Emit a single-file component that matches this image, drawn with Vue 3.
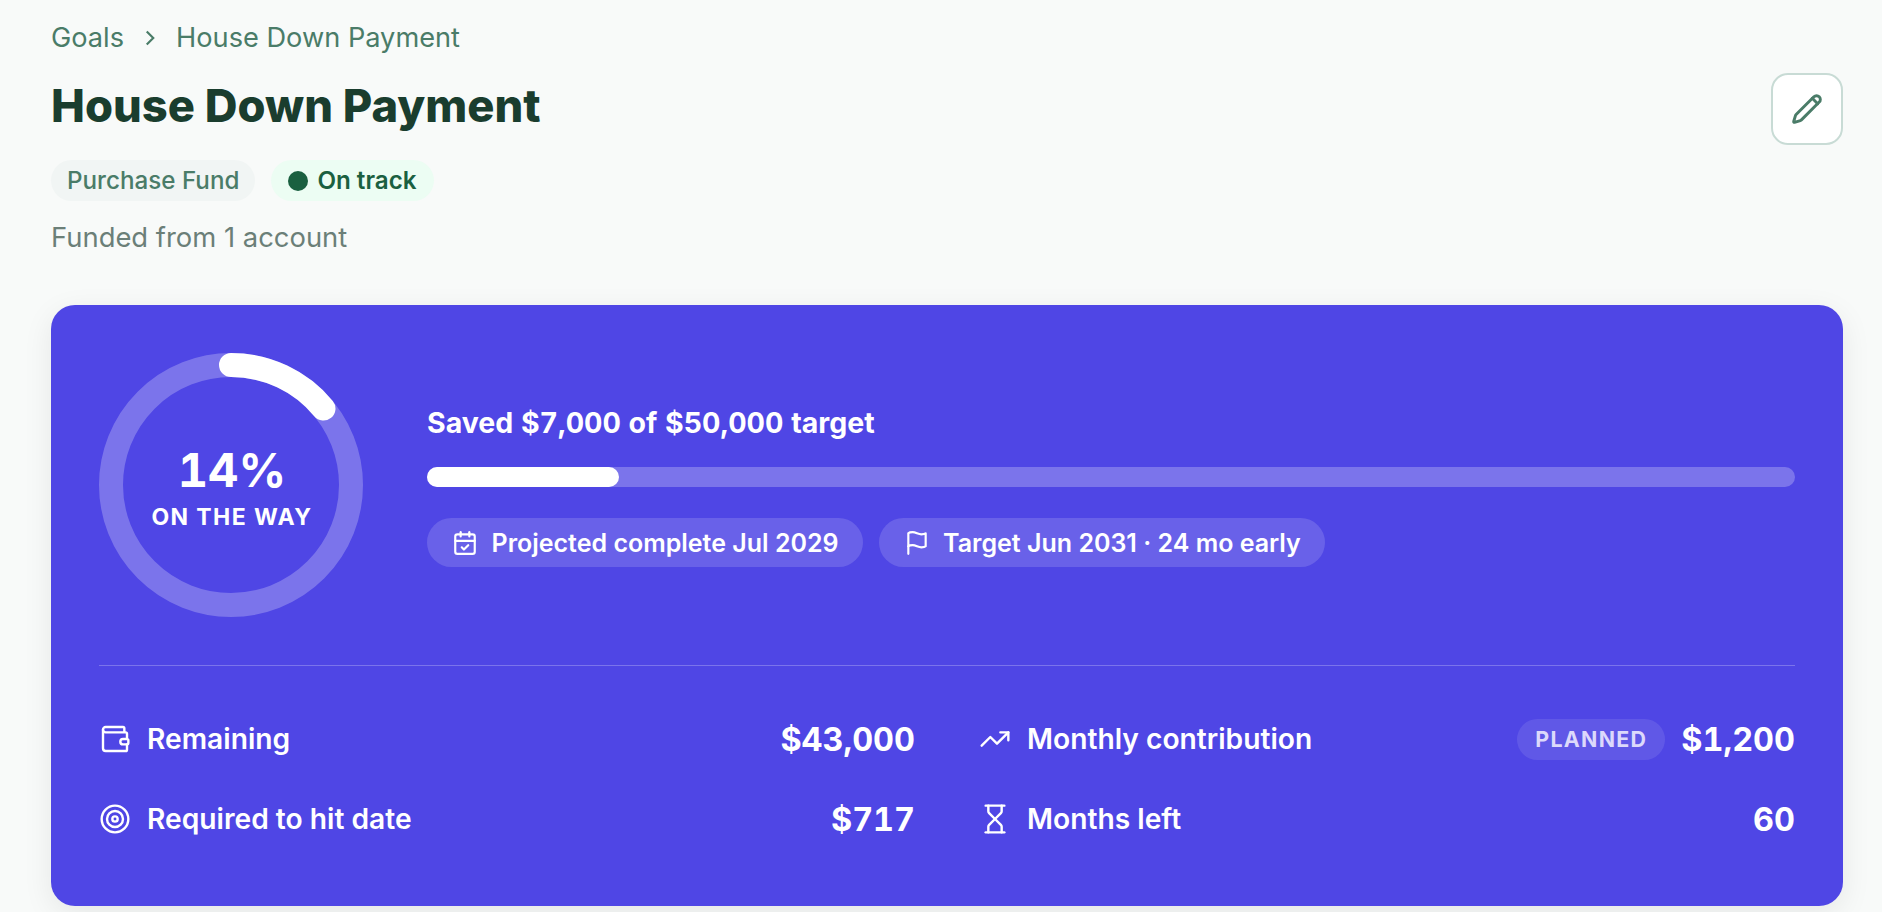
<template>
  <div class="page">
    <nav class="crumbs">
      <span>Goals</span>
      <svg class="crumb-sep" viewBox="0 0 24 24"><path d="m9 18 6-6-6-6" /></svg>
      <span>House Down Payment</span>
    </nav>

    <header class="head">
      <div class="head-text">
        <h1>House Down Payment</h1>
        <div class="tags">
          <span class="tag tag-gray">Purchase Fund</span>
          <span class="tag tag-green"><i class="dot"></i>On track</span>
        </div>
        <p class="funded">Funded from 1 account</p>
      </div>
      <button class="edit" type="button">
        <svg viewBox="0 0 24 24">
          <path d="M21.174 6.812a1 1 0 0 0-3.986-3.987L3.842 16.174a2 2 0 0 0-.5.83l-1.321 4.352a.5.5 0 0 0 .623.622l4.353-1.32a2 2 0 0 0 .83-.497z" />
          <path d="m16 4 4 4" />
        </svg>
      </button>
    </header>

    <section class="card">
      <div class="top">
        <div class="ring">
          <svg viewBox="0 0 264 264">
            <circle class="ring-track" cx="132" cy="132" r="120" />
            <circle
              class="ring-value"
              cx="132"
              cy="132"
              r="120"
              :stroke-dasharray="ringDash"
              transform="rotate(-90 132 132)"
            />
          </svg>
          <div class="ring-text">
            <strong>14%</strong>
            <span>ON THE WAY</span>
          </div>
        </div>

        <div class="progress">
          <p class="saved">Saved $7,000 of $50,000 target</p>
          <div class="bar"><div class="bar-fill" :style="{ width: percent + '%' }"></div></div>
          <div class="chips">
            <span class="chip">
              <svg viewBox="0 0 24 24">
                <path d="M8 2v4" />
                <path d="M16 2v4" />
                <rect x="3" y="4" width="18" height="18" rx="2" />
                <path d="M3 10h18" />
                <path d="m9 16 2 2 4-4" />
              </svg>
              Projected complete Jul 2029
            </span>
            <span class="chip">
              <svg viewBox="0 0 24 24">
                <path d="M4 15s1-1 4-1 5 2 8 2 4-1 4-1V3s-1 1-4 1-5-2-8-2-4 1-4 1z" />
                <path d="M4 22v-7" />
              </svg>
              Target Jun 2031 · 24 mo early
            </span>
          </div>
        </div>
      </div>

      <div class="stats">
        <div class="stat">
          <svg viewBox="0 0 24 24">
            <path d="M19 7V4a1 1 0 0 0-1-1H5a2 2 0 0 0 0 4h15a1 1 0 0 1 1 1v4h-3a2 2 0 0 0 0 4h3a1 1 0 0 0 1-1v-2a1 1 0 0 0-1-1" />
            <path d="M3 5v14a2 2 0 0 0 2 2h15a1 1 0 0 0 1-1v-4" />
          </svg>
          <span class="label">Remaining</span>
          <span class="value">$43,000</span>
        </div>
        <div class="stat">
          <svg viewBox="0 0 24 24">
            <path d="M22 7 13.5 15.5 8.5 10.5 2 17" />
            <path d="M16 7h6v6" />
          </svg>
          <span class="label">Monthly contribution</span>
          <span class="planned">PLANNED</span>
          <span class="value">$1,200</span>
        </div>
        <div class="stat">
          <svg viewBox="0 0 24 24">
            <circle cx="12" cy="12" r="10" />
            <circle cx="12" cy="12" r="6" />
            <circle cx="12" cy="12" r="2" />
          </svg>
          <span class="label">Required to hit date</span>
          <span class="value">$717</span>
        </div>
        <div class="stat">
          <svg viewBox="0 0 24 24">
            <path d="M5 22h14" />
            <path d="M5 2h14" />
            <path d="M17 22v-4.172a2 2 0 0 0-.586-1.414L12 12l-4.414 4.414A2 2 0 0 0 7 17.828V22" />
            <path d="M7 2v4.172a2 2 0 0 0 .586 1.414L12 12l4.414-4.414A2 2 0 0 0 17 6.172V2" />
          </svg>
          <span class="label">Months left</span>
          <span class="value">60</span>
        </div>
      </div>
    </section>
  </div>
</template>

<script setup>
const percent = 14;
const circumference = 2 * Math.PI * 120;
const ringDash = `${(circumference * percent) / 100} ${circumference}`;
</script>

<style>
body {
  background: #f8faf9;
}
</style>

<style scoped>
.page {
  box-sizing: border-box;
  height: 912px;
  overflow: hidden;
  padding: 20px 39px 0 51px;
  font-family: Inter, "Liberation Sans", sans-serif;
  background: #f8faf9;
}
.crumbs {
  display: flex;
  align-items: center;
  gap: 13px;
  height: 35px;
  font-size: 27.2px;
  color: #4a7c68;
}
.crumb-sep {
  width: 26px;
  height: 26px;
  fill: none;
  stroke: #4a7c68;
  stroke-width: 2;
}
.head {
  display: flex;
  justify-content: space-between;
  align-items: flex-start;
}
h1 {
  margin: 25px 0 0;
  font-size: 45.3px;
  line-height: 52px;
  font-weight: 800;
  color: #1a3d2e;
}
.tags {
  display: flex;
  gap: 16px;
  margin-top: 28px;
}
.tag {
  display: flex;
  align-items: center;
  height: 41px;
  padding: 0 16px;
  border-radius: 21px;
  font-size: 24.2px;
  font-weight: 500;
}
.tag-gray {
  background: #f1f5f4;
  color: #4a7c68;
}
.tag-green {
  padding: 0 17px;
  background: #ecfdf3;
  color: #1a6040;
  font-weight: 600;
}
.dot {
  width: 20px;
  height: 20px;
  margin-right: 9px;
  border-radius: 50%;
  background: #1a6040;
}
.funded {
  margin: 18px 0 0;
  font-size: 27.4px;
  line-height: 36px;
  color: #6b7f78;
}
.edit {
  box-sizing: border-box;
  width: 72px;
  height: 72px;
  margin-top: 18px;
  padding: 0;
  display: flex;
  align-items: center;
  justify-content: center;
  background: #fff;
  border: 2px solid #c8dbd5;
  border-radius: 17px;
}
.edit svg {
  width: 32px;
  height: 32px;
  fill: none;
  stroke: #4a7c68;
  stroke-width: 2.2;
  stroke-linecap: round;
  stroke-linejoin: round;
}
.card {
  margin-top: 50px;
  padding: 48px;
  height: 601px;
  box-sizing: border-box;
  border-radius: 24px;
  background: #4f46e5;
  color: #fff;
  box-shadow: 0 8px 30px rgba(0, 0, 0, 0.08);
}
.top {
  display: flex;
  align-items: flex-start;
  gap: 64px;
  padding-bottom: 48px;
  border-bottom: 1px solid rgba(255, 255, 255, 0.25);
}
.ring {
  position: relative;
  flex: none;
  width: 264px;
  height: 264px;
}
.ring svg {
  display: block;
  width: 264px;
  height: 264px;
  fill: none;
  stroke-width: 24;
}
.ring-track {
  stroke: rgba(255, 255, 255, 0.25);
}
.ring-value {
  stroke: #fff;
  stroke-linecap: round;
}
.ring-text {
  position: absolute;
  inset: 0;
  padding: 5px 0 0 2px;
  display: flex;
  flex-direction: column;
  align-items: center;
  justify-content: center;
}
.ring-text strong {
  font-size: 47px;
  line-height: 54px;
  font-weight: 700;
  font-variant-numeric: tabular-nums;
}
.ring-text span {
  margin-top: 5px;
  font-size: 23px;
  line-height: 30px;
  font-weight: 700;
  letter-spacing: 1.4px;
}
.progress {
  flex: 1;
  padding-top: 52px;
}
.saved {
  margin: 0;
  font-size: 28.5px;
  line-height: 36px;
  font-weight: 700;
  font-variant-numeric: tabular-nums;
}
.bar {
  height: 20px;
  margin-top: 26px;
  border-radius: 10px;
  background: rgba(255, 255, 255, 0.25);
}
.bar-fill {
  height: 100%;
  border-radius: 10px;
  background: #fff;
}
.chips {
  display: flex;
  gap: 16px;
  margin-top: 31px;
}
.chip {
  display: flex;
  align-items: center;
  gap: 13.5px;
  height: 49px;
  padding: 0 24px 0 25px;
  border-radius: 25px;
  background: rgba(255, 255, 255, 0.15);
  font-size: 25px;
  font-weight: 600;
}
.chip svg {
  width: 26px;
  height: 26px;
  fill: none;
  stroke: #fff;
  stroke-width: 2;
  stroke-linecap: round;
  stroke-linejoin: round;
}
.stats {
  display: grid;
  grid-template-columns: 1fr 1fr;
  column-gap: 64px;
  row-gap: 32px;
  margin-top: 49px;
}
.stat {
  display: flex;
  align-items: center;
  height: 48px;
}
.stat svg {
  flex: none;
  width: 32px;
  height: 32px;
  margin-right: 16px;
  fill: none;
  stroke: #fff;
  stroke-width: 1.8;
  stroke-linecap: round;
  stroke-linejoin: round;
}
.label {
  flex: 1;
  font-size: 28.2px;
  font-weight: 600;
}
.value {
  font-size: 32.4px;
  font-weight: 700;
  font-variant-numeric: tabular-nums;
}
.planned {
  margin-right: 16px;
  padding: 0 18px;
  height: 41px;
  line-height: 41px;
  border-radius: 21px;
  background: rgba(255, 255, 255, 0.1);
  color: #dcd9fb;
  font-size: 21.4px;
  font-weight: 700;
  letter-spacing: 1.3px;
}
</style>
